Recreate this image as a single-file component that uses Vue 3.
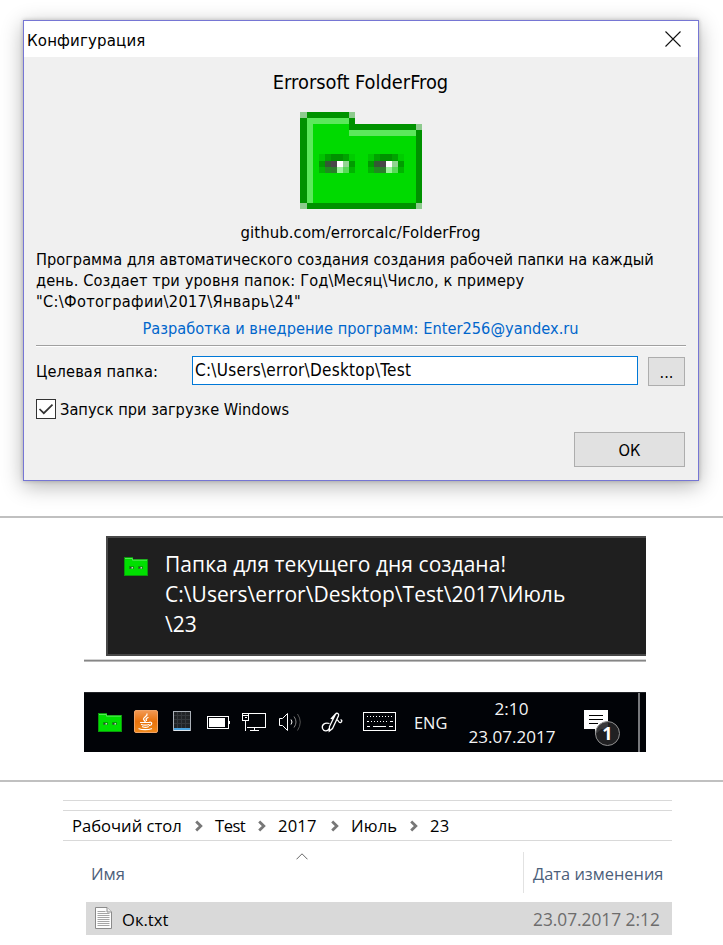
<script setup>
import { h, ref } from 'vue'

const target = ref('C:\\Users\\error\\Desktop\\Test')
const crumbs = ['Рабочий стол', 'Test', '2017', 'Июль', '23']

// One eye of the frog, three pixel rows of six cells
const eye = [
  ['#00c400', '#00a300', '#009200', '#009200', '#00a300', '#00cc00'],
  ['#009c00', '#345934', '#4a474a', '#ffffff', '#91d491', '#009c00'],
  ['#00b400', '#208a20', '#2b7d2b', '#9cf29c', '#58d958', '#00b400'],
]

const px = (x, y, width, height, fill) => h('rect', { x, y, width, height, fill })

// Cell edges of the 20 x 16 icon scaled up to 122 x 97 whole pixels
const edgeX = (i) => 6 * i + (i > 0) + (i > 9)
const edgeY = (i) => 6 * i + (i > 7)
const cell = (x, y, w, hgt, fill) =>
  px(edgeX(x), edgeY(y), edgeX(x + w) - edgeX(x), edgeY(y + hgt) - edgeY(y), fill)

const FrogIcon = () =>
  h('svg', { viewBox: '0 0 122 97', 'shape-rendering': 'crispEdges' }, [
    cell(0, 0, 9, 16, '#009200'),
    cell(8, 2, 12, 14, '#009200'),
    cell(1, 1, 7, 14, '#5be85b'),
    cell(8, 3, 11, 1, '#5be85b'),
    cell(2, 2, 6, 13, '#00da00'),
    cell(8, 4, 11, 11, '#00da00'),
    cell(0, 0, 1, 1, '#8dcb8d'),
    cell(8, 0, 1, 1, '#8dcb8d'),
    cell(19, 2, 1, 1, '#8dcb8d'),
    cell(0, 15, 1, 1, '#8dcb8d'),
    cell(19, 15, 1, 1, '#8dcb8d'),
    ...[3, 11].flatMap((left) =>
      eye.flatMap((row, r) => row.map((fill, c) => cell(left + c, 7 + r, 1, 1, fill)))
    ),
  ])

const SmallFrog = () =>
  h('svg', { viewBox: '0 0 24 19' }, [
    h('path', { d: 'M0 0H9V2H24V19H0Z', fill: '#0a9a0a' }),
    h('path', { d: 'M1 1H8V3H23V18H1Z', fill: '#00df00' }),
    h('path', { d: 'M1 1.5H8.5V3.2H23', fill: 'none', stroke: '#6bea6b', 'stroke-width': 0.8 }),
    ...[5, 14].flatMap((x) => [
      px(x, 9, 5, 1, '#00a800'),
      px(x, 10, 5, 2, '#179017'),
      px(x + 1, 10, 2, 1, '#383838'),
      px(x + 2.6, 10, 1.2, 1.6, '#d8f8d8'),
    ]),
  ])
</script>

<template>
  <main class="page">
    <section class="dialog">
      <header class="titlebar">
        <span class="caption">Конфигурация</span>
        <svg class="close" viewBox="0 0 16 16"><path d="M.5 .5 15.5 15.5M15.5 .5 .5 15.5" /></svg>
      </header>
      <div class="body">
        <h1 class="product">Errorsoft FolderFrog</h1>
        <FrogIcon class="logo" />
        <div class="repo">github.com/errorcalc/FolderFrog</div>
        <div class="about">
          <div>Программа для автоматического создания создания рабочей папки на каждый</div>
          <div class="about-second">день. Создает три уровня папок: Год\Месяц\Число, к примеру</div>
          <div class="about-third">"C:\Фотографии\2017\Январь\24"</div>
        </div>
        <div class="contact">Разработка и внедрение программ: Enter256@yandex.ru</div>
        <div class="rule"></div>
        <div class="field">
          <span class="label">Целевая папка:</span>
          <input v-model="target" class="input" type="text" />
          <button class="btn browse">...</button>
        </div>
        <label class="check">
          <span class="box">
            <svg viewBox="0 0 18 18"><path d="M2.5 9 6.8 13.2 15.5 4.6" /></svg>
          </span>
          <span class="check-text">Запуск при загрузке Windows</span>
        </label>
        <button class="btn ok">ОК</button>
      </div>
    </section>

    <div class="separator"></div>

    <section class="toast">
      <SmallFrog class="toast-icon" />
      <div class="toast-text">
        <div>Папка для текущего дня создана!</div>
        <div>C:\Users\error\Desktop\Test\2017\Июль</div>
        <div>\23</div>
      </div>
    </section>
    <div class="edge"></div>

    <section class="taskbar">
      <div class="tray">
        <SmallFrog class="tray-frog" />
        <svg viewBox="0 0 24 24">
          <defs>
            <linearGradient id="java" x1="0" y1="0" x2="0" y2="1">
              <stop offset="0" stop-color="#f39a55" />
              <stop offset=".5" stop-color="#e8720c" />
              <stop offset="1" stop-color="#f08a1c" />
            </linearGradient>
          </defs>
          <rect x=".5" y=".5" width="23" height="22" rx="1.5" fill="url(#java)" stroke="#f0a468" />
          <g fill="none" stroke="#fff" stroke-linecap="round">
            <path d="M13 4C14 6 9.200 7.200 9.500 9.200 9.700 10.200 11 10.800 11.200 11.600M14 7.500C12.500 8.300 11.500 9 12.500 10.400" stroke-width="1.300" />
            <path d="M6.500 12.500H15.500M7.500 14.500C9 15.300 13 15.300 15 14.500M8.500 16.700C10 17.300 13 17.300 14.300 16.700M5 18.700C8 20 14 20 17.500 18.700M15.500 12.300C18.500 11.600 18.500 14.800 15.500 15.500" stroke-width="1.200" />
          </g>
        </svg>
        <svg viewBox="0 0 24 24">
          <rect x="3" y="1" width="18" height="20" fill="#aab0b7" />
          <rect x="4" y="2" width="16" height="16" fill="#202326" />
          <path d="M4 5.500H20M4 9.500H20M4 13.500H20M7.500 2V18M11.500 2V18M15.500 2V18" stroke="#34383c" stroke-width="1" />
          <rect x="4" y="18" width="16" height="2" fill="#4aa3df" />
          <rect x="4" y="20" width="16" height="1" fill="#dfe6ec" />
        </svg>
        <svg viewBox="0 0 24 24" shape-rendering="crispEdges">
          <rect x="1.500" y="6.500" width="21" height="12" fill="none" stroke="#fff" />
          <rect x="3" y="8" width="16" height="9" fill="#fff" />
          <rect x="23" y="11" width="1" height="3" fill="#fff" />
        </svg>
        <svg viewBox="0 0 24 24" class="line" shape-rendering="crispEdges">
          <path d="M6 3.500H23.500V17.500H5M.5 3.500H6.500V10.500H.5ZM3.500 10.500V21M.5 5.500H6.500M2.500 7.500H4.500M12.500 17.500V20.500M8 20.500H17" />
        </svg>
        <svg viewBox="0 0 24 24" class="line">
          <path d="M1.500 8.500H4.500L9.500 3.500V20.500L4.500 15.500H1.500Z" />
          <path d="M13 9.500Q15 12 13 14.500" />
          <path d="M16 6.500Q20 12 16 17.500" stroke="#858585" />
          <path d="M19.500 4Q25 12 19.500 20.500" stroke="#555" />
        </svg>
      </div>
      <svg class="pen line" viewBox="0 0 24 24">
        <path d="M9.500 16.500 15.500 4.300C16.500 2.300 19.300 3.500 18.500 5.700L12.500 18.500 9.300 21ZM13.500 9 11.500 8.500 15.500 4M9.500 13.500C4.500 12 1.500 15 2.500 18.500 4 22 8 21.500 9.500 18M16.500 10C19 9.500 18 13 20.500 12.500 22.500 12 22 9.500 20.500 10" />
      </svg>
      <svg class="keyboard" viewBox="0 0 34 20" shape-rendering="crispEdges">
        <rect x=".5" y=".5" width="32" height="18" />
        <path d="M4 4.500H30M5 9.500H26" stroke-dasharray="1 2" />
        <path d="M4 9.500H6M27 9.500H30M4 14.500H7M10 14.500H23M26 14.500H30" />
      </svg>
      <span class="lang">ENG</span>
      <div class="clock">
        <div class="time">2:10</div>
        <div>23.07.2017</div>
      </div>
      <div class="action">
        <svg viewBox="0 0 24 26">
          <path d="M0 0H24V19H17L11 25V19H0Z" fill="#fff" />
          <path d="M5 5.500H19M5 9.500H19M5 13.500H14" stroke="#000" shape-rendering="crispEdges" />
        </svg>
        <span class="badge">1</span>
      </div>
      <div class="peek"></div>
    </section>

    <div class="separator lower"></div>

    <section class="explorer">
      <nav class="crumbs">
        <template v-for="(name, i) in crumbs" :key="name">
          <svg v-if="i" class="chevron" viewBox="0 0 8 12"><path d="M1.200 1.500 5.800 6 1.200 10.500" /></svg>
          <span :class="['crumb', { tight: name === 'Test', first: !i }]">{{ name }}</span>
        </template>
      </nav>
      <div class="columns">
        <div class="col-name">
          Имя
          <svg class="sort" viewBox="0 0 12 7"><path d="M.5 6.300 6 .8 11.500 6.300" /></svg>
        </div>
        <div class="col-date">Дата изменения</div>
      </div>
      <div class="file">
        <svg class="doc" viewBox="0 0 17 22">
          <path d="M.5 .5H12L16.500 5V21.500H.5Z" fill="#fdfdfd" stroke="#8b8b8b" />
          <path d="M12 .5V5H16.500" fill="#eee" stroke="#8b8b8b" />
          <path d="M2.500 4.500H10.500M2.500 6.500H14.500M2.500 8.500H14.500M2.500 10.500H14.500M2.500 12.500H14.500M2.500 14.500H14.500M2.500 16.500H14.500M2.500 18.500H14.500" stroke="#a5a5a5" />
        </svg>
        <span class="filename">Ок.txt</span>
        <span class="modified">23.07.2017 2:12</span>
      </div>
    </section>
  </main>
</template>

<style>
body { background: #fff; }
</style>

<style scoped>
* { box-sizing: border-box; }

.page {
  width: 723px;
  height: 945px;
  padding-top: 20px;
  overflow: hidden;
  background: #fff;
  color: #000;
  white-space: nowrap;
  font-family: "Open Sans", sans-serif;
}
svg { display: block; flex: none; }

/* Dialog */
.dialog {
  width: 676px;
  height: 461px;
  margin-left: 23px;
  border: 1px solid #7676d4;
  background: #f0f0f0;
  box-shadow: 0 0 4px rgba(0, 0, 0, .22), 0 5px 20px rgba(0, 0, 0, .3);
  font: 16.24px/21px "DejaVu Sans Condensed", "DejaVu Sans", sans-serif;
}
.titlebar {
  display: flex;
  justify-content: space-between;
  height: 36px;
  padding: 9px 17px 0 3px;
  background: #fff;
}
.caption { font-size: 16.7px; letter-spacing: .15px; }
.close { width: 16px; height: 16px; margin-top: 1px; }
.close path { fill: none; stroke: #111; stroke-width: 1.1; }
.body { padding: 10px 13px 0 12px; }
.product {
  margin: 0;
  text-align: center;
  font-size: 19.85px;
  font-weight: 400;
  line-height: 31px;
  height: 30px;
}
.logo { width: 122px; height: 97px; margin: 15px auto 13px; }
.repo { text-align: center; font-size: 16.6px; letter-spacing: .07px; line-height: 21px; height: 21px; }
.about { margin-top: 6px; }
.about-second { letter-spacing: .12px; }
.about-third { letter-spacing: .32px; }
.contact { margin-top: 6px; text-align: center; color: #0066cc; letter-spacing: .02px; }
.rule {
  height: 2px;
  margin: 6px -1px 0 0;
  border-top: 1px solid #a0a0a0;
  background: #fff;
}
.field { display: flex; align-items: flex-start; margin-top: 9px; height: 30px; }
.label { width: 156px; line-height: 31px; letter-spacing: .12px; }
.input {
  width: 446px;
  height: 29px;
  padding: 0 0 1px 2px;
  border: 1px solid #0078d7;
  border-radius: 0;
  outline: none;
  background: #fff;
  color: #000;
  font: inherit;
  font-size: 17px;
  letter-spacing: .26px;
}
.btn {
  display: block;
  padding: 0;
  border: 1px solid #adadad;
  border-radius: 0;
  background: #e1e1e1;
  color: #000;
  font: inherit;
}
.browse { width: 37px; height: 29px; margin: 1px 0 0 10px; padding-top: 1px; }
.check { display: flex; gap: 4px; margin-top: 13px; height: 20px; line-height: 21px; }
.check-text { letter-spacing: .02px; }
.box { width: 20px; height: 20px; border: 1px solid #333; background: #fff; }
.box path { fill: none; stroke: #333; stroke-width: 1.7; }
.ok { width: 111px; height: 35px; margin: 13px 0 0 auto; padding-top: 1px; }

.separator { height: 2px; margin-top: 35px; background: #c0c0c0; }

/* Toast */
.toast {
  display: flex;
  width: 540px;
  height: 120px;
  margin: 18px 0 0 106px;
  border: 2px solid #484848;
  border-right: 0;
  background: #1f1f1f;
}
.toast-icon { width: 24px; height: 19px; margin: 19px 16px 0; }
.toast-text { padding: 11px 0 0 1px; color: #fff; font-size: 21px; line-height: 30px; letter-spacing: .05px; }
.edge {
  width: 562px;
  height: 3px;
  margin: 3px 0 0 84px;
  border-top: 1px solid #d4d4d4;
  border-bottom: 1px solid #b8b8b8;
  background: #868686;
}

/* Taskbar */
.taskbar {
  display: flex;
  align-items: center;
  width: 562px;
  height: 60px;
  margin: 30px 0 0 84px;
  padding: 0 0 1px 14px;
  border-top: 1px solid #222428;
  background: #010307;
  color: #f4f4f4;
  font-size: 17px;
}
.tray { display: flex; gap: 12px; height: 24px; }
.tray svg { width: 24px; height: 24px; }
.tray .tray-frog { height: 19px; margin-top: 3px; }
.line { fill: none; stroke: #fff; stroke-width: 1; }
.pen { width: 24px; height: 24px; margin-left: 18px; stroke-width: 1.3; }
.keyboard { width: 34px; height: 20px; margin-left: 19px; fill: none; stroke: #fff; }
.lang { width: 54px; padding-left: 17px; margin-right: 16px; font-size: 16.4px; }
.clock { width: 90px; padding-top: 1px; text-align: center; font-size: 17.1px; line-height: 28px; }
.time { padding-right: 1px; }
.action { position: relative; width: 36px; height: 36px; margin: 12px 0 0 27px; }
.action svg { width: 24px; height: 26px; }
.badge {
  position: absolute;
  top: 11px;
  left: 11px;
  width: 25px;
  height: 25px;
  border: 1px solid #909090;
  border-radius: 50%;
  background: rgba(36, 36, 38, .9);
  color: #fff;
  text-align: center;
  font-size: 18px;
  font-weight: 700;
  line-height: 23px;
}
.peek { align-self: stretch; width: 2px; margin: 0 0 -1px 18px; background: #77797c; }
.lower { margin-top: 28px; }

/* Explorer */
.explorer {
  width: 609px;
  margin: 18px 0 0 63px;
  border-top: 1px solid #d9d9d9;
  font-size: 16.6px;
}
.crumbs {
  display: grid;
  grid-template-columns: 124px 20px 43px 20px 53px 20px 59px 20px auto;
  align-items: center;
  height: 31px;
  margin-top: 9px;
  padding-left: 8px;
  border: solid #d9d9d9;
  border-width: 1px 0;
  line-height: 29px;
}
.crumb { letter-spacing: .15px; }
.first { padding-left: 1px; letter-spacing: 0; }
.tight { letter-spacing: -.5px; }
.chevron { width: 8px; height: 12px; }
.chevron path { fill: none; stroke: #777; stroke-width: 2.8; }
.columns { display: flex; height: 41px; margin: 11px 0 9px 23px; color: #4c607a; line-height: 43px; }
.col-name { position: relative; width: 438px; padding-left: 5px; border-right: 1px solid #e2e2e2; }
.sort { position: absolute; top: 1px; left: 210px; width: 12px; height: 7px; }
.sort path { fill: none; stroke: #666; stroke-width: 1; }
.col-date { padding-left: 9px; font-size: 16.4px; }
.file {
  display: flex;
  height: 33px;
  margin-left: 23px;
  padding-left: 9px;
  background: #d9d9d9;
  line-height: 35px;
}
.doc { width: 17px; height: 22px; margin-top: 5px; }
.filename { width: 421px; padding-left: 10px; }
.modified { color: #6d6d6d; font-size: 17.3px; }
</style>
